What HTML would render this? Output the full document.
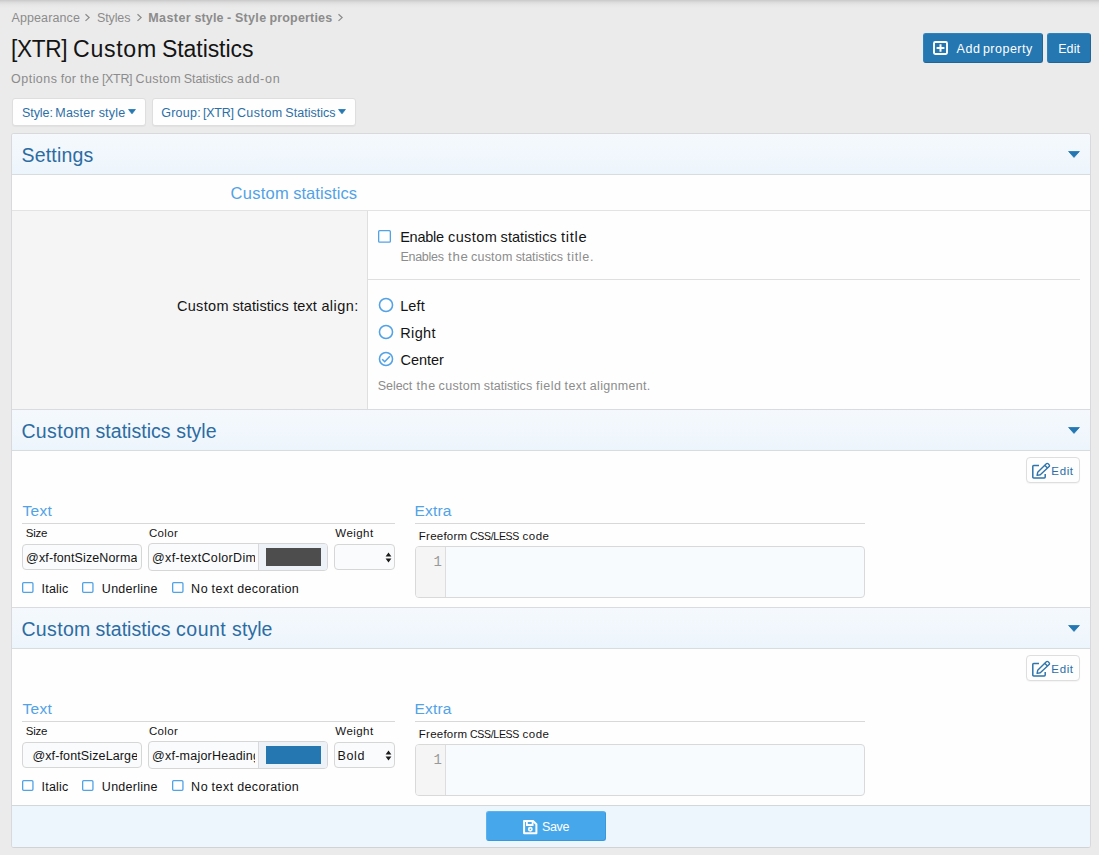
<!DOCTYPE html>
<html lang="en">
<head>
<meta charset="utf-8">
<title>[XTR] Custom Statistics</title>
<style>
*{box-sizing:border-box;margin:0;padding:0}
html,body{width:1099px;height:855px;overflow:hidden}
body{background:#ebebeb;font-family:"Liberation Sans",sans-serif;font-size:13px;color:#141414;position:relative}
.topshadow{position:absolute;left:0;top:0;width:1099px;height:8px;background:linear-gradient(to bottom,#c9c9c9 0,#dcdcdc 30%,#e6e6e6 60%,#ebebeb 100%)}
.abs{position:absolute;white-space:nowrap}
.t{position:absolute;white-space:nowrap}
.btn{position:absolute;border-radius:3px;white-space:nowrap}
.btn.primary{background:#2577b1;color:#fff;border:1px solid #1f6596;border-color:#2b83c0 #1f6596 #1f6596 #2b83c0}
.btn.link{background:#fefefe;color:#2c6fa6;border:1px solid #dedede;box-shadow:0 1px 1px rgba(0,0,0,.04)}
.panel{position:absolute;left:11px;top:133px;width:1080px;height:715px;background:#fefefe;border:1px solid #d7d9db;border-bottom-color:#d0d2d4;border-radius:3px;overflow:hidden}
.panel>*{position:absolute}
.sechead{left:0;width:1078px;height:42px;background:linear-gradient(to bottom,#f5f9fd 0,#edf5fc 100%);border-top:1px solid #d9dcdf;border-bottom:1px solid #d9dcdf;color:#2c6ca2}
.subhead{left:0;top:41px;width:1078px;height:36px;border-bottom:1px solid #e3e3e3;color:#52a2e6}
.labelcol{left:0;top:77px;width:356px;height:198px;background:#f5f5f5;border-right:1px solid #dfdfdf}
.cb{position:absolute;border:1px solid #60a8e4;border-radius:1.5px;background:#fefefe}
.rb{position:absolute;width:14.6px;height:14.6px;border:1.5px solid #5aa5e4;border-radius:50%;background:#fefefe}
.hint{color:#8c8c8c}
.hr{background:#dfdfdf;height:1px}
.grp{left:0;width:1078px;height:157px}
.grp>*{position:absolute}
.ul{height:1px;background:#d8d8d8}
.inp{border:1px solid #d6d6d6;border-radius:4px;background:#fafbfc;overflow:hidden;color:#141414}
.editbtn{width:54px;height:26px;border:1px solid #dedede;border-radius:4px;background:#fefefe;color:#2c6fa6;box-shadow:0 1px 1px rgba(0,0,0,.04)}
.code{width:450px;height:52px;border:1px solid #d9d9d9;border-radius:4px;background:#f8fbfe;overflow:hidden}
.code .gut{position:absolute;left:0;top:0;width:30px;height:50px;background:#f5f5f5;border-right:1px solid #dddddd}
.code .ln{position:absolute;left:0;top:7px;width:26px;text-align:right;font-family:"Liberation Mono",monospace;font-size:14px;line-height:16px;color:#999}
.footer{left:0;top:671px;width:1078px;height:42px;background:#edf5fd;border-top:1px solid #d4d7da}
.save{position:absolute;left:474px;top:5px;width:120px;height:30px;background:#47a7eb;border-radius:3px;color:#fff;border:1px solid #3f9fe3;border-color:#5bb2ef #3b97db #3b97db #5bb2ef}
</style>
</head>
<body>
<div class="topshadow"></div>
<div class="crumbs"><span class="t" style="left:11.47px;top:11px;font-size:12.5px;line-height:14px;letter-spacing:0.107px;color:#8c8c8c;">Appearance</span><svg class="abs" style="left:84.0px;top:13px" width="7" height="9" viewBox="0 0 7 9"><path d="M1.5 1.3 L5.1 4.6 L1.5 7.9" fill="none" stroke="#8c8c8c" stroke-width="1.25"/></svg><span class="t" style="left:97.04px;top:11px;font-size:12.5px;line-height:14px;letter-spacing:-0.125px;color:#8c8c8c;">Styles</span><svg class="abs" style="left:135.6px;top:13px" width="7" height="9" viewBox="0 0 7 9"><path d="M1.5 1.3 L5.1 4.6 L1.5 7.9" fill="none" stroke="#8c8c8c" stroke-width="1.25"/></svg><span class="t" style="left:148.18px;top:11px;font-size:12.5px;line-height:14px;letter-spacing:0.440px;color:#8c8c8c;font-weight:700;">Master</span> <span class="t" style="left:194.56px;top:11px;font-size:12.5px;line-height:14px;letter-spacing:0.094px;color:#8c8c8c;font-weight:700;">style</span> <span class="t" style="left:227.01px;top:11px;font-size:12.5px;line-height:14px;color:#8c8c8c;font-weight:700;">-</span> <span class="t" style="left:234.95px;top:11px;font-size:12.5px;line-height:14px;letter-spacing:0.325px;color:#8c8c8c;font-weight:700;">Style</span> <span class="t" style="left:269.39px;top:11px;font-size:12.5px;line-height:14px;letter-spacing:0.188px;color:#8c8c8c;font-weight:700;">properties</span><svg class="abs" style="left:336.7px;top:13px" width="7" height="9" viewBox="0 0 7 9"><path d="M1.5 1.3 L5.1 4.6 L1.5 7.9" fill="none" stroke="#8c8c8c" stroke-width="1.25"/></svg></div>
<h1 style="font-weight:400"><span class="t" style="left:11.09px;top:36px;font-size:23px;line-height:26px;letter-spacing:-0.350px;color:#141414;transform:scaleX(0.9833);transform-origin:0 0;">[XTR]</span> <span class="t" style="left:73.04px;top:36px;font-size:23px;line-height:26px;letter-spacing:0.700px;color:#141414;transform:scaleX(1.0054);transform-origin:0 0;">Custom</span> <span class="t" style="left:161.97px;top:36px;font-size:23px;line-height:26px;letter-spacing:-0.062px;color:#141414;">Statistics</span></h1>
<span class="t" style="left:11.11px;top:72px;font-size:12.5px;line-height:14px;letter-spacing:0.460px;color:#8c8c8c;">Options</span> <span class="t" style="left:60.83px;top:72px;font-size:12.5px;line-height:14px;letter-spacing:0.194px;color:#8c8c8c;">for</span> <span class="t" style="left:79.91px;top:72px;font-size:12.5px;line-height:14px;letter-spacing:0.700px;color:#8c8c8c;transform:scaleX(1.0090);transform-origin:0 0;">the</span> <span class="t" style="left:101.91px;top:72px;font-size:12.5px;line-height:14px;letter-spacing:-0.319px;color:#8c8c8c;">[XTR]</span> <span class="t" style="left:135.57px;top:72px;font-size:12.5px;line-height:14px;letter-spacing:0.395px;color:#8c8c8c;">Custom</span> <span class="t" style="left:183.74px;top:72px;font-size:12.5px;line-height:14px;letter-spacing:-0.056px;color:#8c8c8c;">Statistics</span> <span class="t" style="left:236.77px;top:72px;font-size:12.5px;line-height:14px;letter-spacing:0.700px;color:#8c8c8c;transform:scaleX(1.0049);transform-origin:0 0;">add-on</span>

<div class="btn primary" style="left:923px;top:33px;width:120px;height:30px"><svg style="position:absolute;left:9px;top:7px" width="15" height="14" viewBox="0 0 15 14"><rect x="1" y="1" width="13" height="12" rx="1.2" fill="none" stroke="#fff" stroke-width="1.9"/><path d="M7.5 3.2 V10.8 M3.6 7 H11.4" stroke="#fff" stroke-width="2" fill="none"/></svg><span class="t" style="left:32.38px;top:8px;font-size:12.5px;line-height:14px;letter-spacing:0.694px;">Add</span> <span class="t" style="left:58.90px;top:8px;font-size:12.5px;line-height:14px;letter-spacing:0.496px;">property</span></div>
<div class="btn primary" style="left:1047px;top:33px;width:44px;height:30px"><span class="t" style="left:10.17px;top:8px;font-size:12.5px;line-height:14px;letter-spacing:0.125px;">Edit</span></div>

<div class="btn link" style="left:12px;top:98px;width:134px;height:28px"><span class="t" style="left:9.04px;top:7px;font-size:12.5px;line-height:14px;letter-spacing:-0.073px;">Style:</span> <span class="t" style="left:42.27px;top:7px;font-size:12.5px;line-height:14px;letter-spacing:0.245px;">Master</span> <span class="t" style="left:85.66px;top:7px;font-size:12.5px;line-height:14px;letter-spacing:0.197px;">style</span><svg class="abs" style="left:114.8px;top:10px" width="8" height="5" viewBox="0 0 8 5"><path d="M0.6 0.5 H7.4 L4.0 4.8 Z" fill="#2577b1" stroke="#2577b1" stroke-width="0.8" stroke-linejoin="round"/></svg></div>
<div class="btn link" style="left:152px;top:98px;width:204px;height:28px"><span class="t" style="left:8.18px;top:7px;font-size:12.5px;line-height:14px;letter-spacing:0.250px;">Group:</span> <span class="t" style="left:50.11px;top:7px;font-size:12.5px;line-height:14px;letter-spacing:-0.294px;">[XTR]</span> <span class="t" style="left:83.88px;top:7px;font-size:12.5px;line-height:14px;letter-spacing:0.455px;">Custom</span> <span class="t" style="left:132.34px;top:7px;font-size:12.5px;line-height:14px;letter-spacing:0.022px;">Statistics</span><svg class="abs" style="left:185.3px;top:10px" width="8" height="5" viewBox="0 0 8 5"><path d="M0.6 0.5 H7.4 L4.0 4.8 Z" fill="#2577b1" stroke="#2577b1" stroke-width="0.8" stroke-linejoin="round"/></svg></div>

<div class="panel">
  <div class="sechead" style="top:-1px"><span class="t" style="left:9.52px;top:10px;font-size:19.5px;line-height:22px;letter-spacing:0.189px;">Settings</span><svg class="abs" style="left:1056px;top:17px" width="12" height="6.6" viewBox="0 0 12 6.6"><path d="M0.6 0.5 H11.4 L6.0 6.3999999999999995 Z" fill="#2577b1" stroke="#2577b1" stroke-width="0.8" stroke-linejoin="round"/></svg></div>
  <div class="subhead"><span class="t" style="left:218.58px;top:9px;font-size:16.5px;line-height:18px;letter-spacing:0.263px;">Custom</span> <span class="t" style="left:281.15px;top:9px;font-size:16.5px;line-height:18px;letter-spacing:0.064px;">statistics</span></div>
  <div class="labelcol"><span class="t" style="left:164.88px;top:87px;font-size:14.5px;line-height:16px;letter-spacing:0.339px;">Custom</span> <span class="t" style="left:220.41px;top:87px;font-size:14.5px;line-height:16px;letter-spacing:0.078px;">statistics</span> <span class="t" style="left:281.18px;top:87px;font-size:14.5px;line-height:16px;letter-spacing:0.108px;">text</span> <span class="t" style="left:309.39px;top:87px;font-size:14.5px;line-height:16px;letter-spacing:0.432px;">align:</span></div>

  <svg class="abs" style="left:365.3px;top:95.0px" width="15" height="14.8" viewBox="0 0 15 14.8"><rect x="1.65" y="1.65" width="11.7" height="11.5" rx="1" fill="#fefefe" stroke="#52a2e6" stroke-width="1.3"/></svg>
  <span class="t" style="left:388.21px;top:95px;font-size:14.5px;line-height:16px;letter-spacing:-0.269px;">Enable</span> <span class="t" style="left:435.99px;top:95px;font-size:14.5px;line-height:16px;letter-spacing:0.400px;">custom</span> <span class="t" style="left:488.61px;top:95px;font-size:14.5px;line-height:16px;letter-spacing:0.056px;">statistics</span> <span class="t" style="left:549.18px;top:95px;font-size:14.5px;line-height:16px;letter-spacing:0.700px;transform:scaleX(1.0120);transform-origin:0 0;">title</span>
  <span class="t hint" style="left:388.38px;top:116px;font-size:12.5px;line-height:14px;letter-spacing:-0.267px;">Enables</span> <span class="t hint" style="left:435.80px;top:116px;font-size:12.5px;line-height:14px;letter-spacing:0.700px;transform:scaleX(1.0589);transform-origin:0 0;">the</span> <span class="t hint" style="left:459.08px;top:116px;font-size:12.5px;line-height:14px;letter-spacing:0.190px;">custom</span> <span class="t hint" style="left:503.66px;top:116px;font-size:12.5px;line-height:14px;letter-spacing:-0.071px;">statistics</span> <span class="t hint" style="left:554.81px;top:116px;font-size:12.5px;line-height:14px;letter-spacing:0.700px;transform:scaleX(1.0040);transform-origin:0 0;">title.</span>
  <div class="hr" style="left:356px;top:145px;width:712px"></div>
  <svg class="abs" style="left:365.6px;top:163.0px" width="16" height="16" viewBox="0 0 16 16"><circle cx="8" cy="8" r="6.55" fill="#fefefe" stroke="#52a2e6" stroke-width="1.55"/></svg><span class="t" style="left:388.21px;top:164px;font-size:14.5px;line-height:16px;letter-spacing:0.102px;">Left</span>
  <svg class="abs" style="left:365.6px;top:190.1px" width="16" height="16" viewBox="0 0 16 16"><circle cx="8" cy="8" r="6.55" fill="#fefefe" stroke="#52a2e6" stroke-width="1.55"/></svg><span class="t" style="left:388.21px;top:191px;font-size:14.5px;line-height:16px;letter-spacing:0.383px;">Right</span>
  <svg class="abs" style="left:365.6px;top:217.3px" width="16" height="16" viewBox="0 0 16 16"><circle cx="8" cy="8" r="6.55" fill="#fefefe" stroke="#52a2e6" stroke-width="1.55"/><path d="M4.2 8.2 L6.7 10.7 L11.9 5.2" fill="none" stroke="#52a2e6" stroke-width="1.6"/></svg><span class="t" style="left:388.47px;top:218px;font-size:14.5px;line-height:16px;letter-spacing:-0.011px;">Center</span>
  <span class="t hint" style="left:365.84px;top:245px;font-size:12.5px;line-height:14px;letter-spacing:-0.057px;">Select</span> <span class="t hint" style="left:404.51px;top:245px;font-size:12.5px;line-height:14px;letter-spacing:0.631px;">the</span> <span class="t hint" style="left:426.58px;top:245px;font-size:12.5px;line-height:14px;letter-spacing:0.330px;">custom</span> <span class="t hint" style="left:471.86px;top:245px;font-size:12.5px;line-height:14px;letter-spacing:0.040px;">statistics</span> <span class="t hint" style="left:524.03px;top:245px;font-size:12.5px;line-height:14px;letter-spacing:0.513px;">field</span> <span class="t hint" style="left:552.51px;top:245px;font-size:12.5px;line-height:14px;letter-spacing:0.408px;">text</span> <span class="t hint" style="left:577.77px;top:245px;font-size:12.5px;line-height:14px;letter-spacing:0.321px;">alignment.</span>

  <div class="sechead" style="top:275px"><span class="t" style="left:9.42px;top:10px;font-size:19.5px;line-height:22px;letter-spacing:0.349px;">Custom</span> <span class="t" style="left:83.57px;top:10px;font-size:19.5px;line-height:22px;letter-spacing:0.027px;">statistics</span> <span class="t" style="left:164.37px;top:10px;font-size:19.5px;line-height:22px;letter-spacing:0.023px;">style</span><svg class="abs" style="left:1056px;top:17px" width="12" height="6.6" viewBox="0 0 12 6.6"><path d="M0.6 0.5 H11.4 L6.0 6.3999999999999995 Z" fill="#2577b1" stroke="#2577b1" stroke-width="0.8" stroke-linejoin="round"/></svg></div>

  <div class="grp" style="top:317px">
    <div class="editbtn" style="left:1013.5px;top:6px"><svg style="position:absolute;left:4px;top:4px" width="20" height="18" viewBox="0 0 20 18"><path d="M14.2 12 V15.1 a0.9 0.9 0 0 1 -0.9 0.9 H2.7 a0.9 0.9 0 0 1 -0.9 -0.9 V4.5 a0.9 0.9 0 0 1 0.9 -0.9 H8" fill="none" stroke="#2f74aa" stroke-width="1.5"/><path d="M6.1 13.4 L6.7 10.3 L15.3 1.8 a1.3 1.3 0 0 1 1.9 0 l0.9 0.9 a1.3 1.3 0 0 1 0 1.9 L9.3 12.8 Z M13.7 3.3 L16.5 6.1" fill="none" stroke="#2f74aa" stroke-width="1.4" stroke-linejoin="round"/></svg><span class="t" style="left:24.86px;top:7px;font-size:11.5px;line-height:12px;letter-spacing:0.603px;">Edit</span></div>
    <span class="t" style="left:10.46px;top:51px;font-size:15.5px;line-height:17px;letter-spacing:0.341px;color:#52a2e6;">Text</span>
    <div class="ul" style="left:10px;top:72px;width:373px"></div>
    <span class="t" style="left:13.78px;top:76px;font-size:11.5px;line-height:12px;letter-spacing:-0.215px;">Size</span>
    <span class="t" style="left:136.93px;top:76px;font-size:11.5px;line-height:12px;letter-spacing:0.343px;">Color</span>
    <span class="t" style="left:323.35px;top:76px;font-size:11.5px;line-height:12px;letter-spacing:0.429px;">Weight</span>
    <div class="inp" style="left:10px;top:93px;width:120px;height:26px"><span class="t" style="left:3.12px;top:6px;font-size:12.5px;line-height:14px;letter-spacing:0.126px;width:110.5px;overflow:hidden;">@xf-fontSizeNormal</span></div>
    <div class="inp" style="left:136px;top:92px;width:180px;height:28px"><span class="t" style="left:3.03px;top:7px;font-size:12.5px;line-height:14px;letter-spacing:0.345px;width:103.4px;overflow:hidden;">@xf-textColorDimmed</span><div style="position:absolute;left:109px;top:0;width:70px;height:26px;background:#edf1f8;border-left:1px solid #d9d9d9"><div style="position:absolute;left:7px;top:4px;width:54.5px;height:18px;background:#4d4d4d"></div></div></div>
    <div class="inp" style="left:322px;top:93px;width:61px;height:26px"><svg style="position:absolute;left:49.5px;top:7px" width="7" height="11" viewBox="0 0 7 11"><path d="M0.6 4.4 L3.5 0.4 L6.4 4.4 Z M0.6 6.4 L3.5 10.4 L6.4 6.4 Z" fill="#1c1c1c"/></svg></div>
    <svg class="abs" style="left:9.3px;top:130.0px" width="13.6" height="13" viewBox="0 0 13.6 13"><rect x="1.65" y="1.65" width="10.299999999999999" height="9.7" rx="1" fill="#fefefe" stroke="#52a2e6" stroke-width="1.3"/></svg><span class="t" style="left:29.55px;top:131px;font-size:12.5px;line-height:14px;letter-spacing:0.215px;">Italic</span>
    <svg class="abs" style="left:69.3px;top:130.0px" width="13.6" height="13" viewBox="0 0 13.6 13"><rect x="1.65" y="1.65" width="10.299999999999999" height="9.7" rx="1" fill="#fefefe" stroke="#52a2e6" stroke-width="1.3"/></svg><span class="t" style="left:89.84px;top:131px;font-size:12.5px;line-height:14px;letter-spacing:0.277px;">Underline</span>
    <svg class="abs" style="left:159.0px;top:130.0px" width="13.6" height="13" viewBox="0 0 13.6 13"><rect x="1.65" y="1.65" width="10.299999999999999" height="9.7" rx="1" fill="#fefefe" stroke="#52a2e6" stroke-width="1.3"/></svg><span class="t" style="left:178.97px;top:131px;font-size:12.5px;line-height:14px;letter-spacing:0.700px;transform:scaleX(1.0041);transform-origin:0 0;">No</span> <span class="t" style="left:199.51px;top:131px;font-size:12.5px;line-height:14px;letter-spacing:0.542px;">text</span> <span class="t" style="left:225.17px;top:131px;font-size:12.5px;line-height:14px;letter-spacing:0.361px;">decoration</span>
    <span class="t" style="left:402.43px;top:51px;font-size:15.5px;line-height:17px;letter-spacing:0.195px;color:#52a2e6;">Extra</span>
    <div class="ul" style="left:403px;top:72px;width:450px"></div>
    <span class="t" style="left:406.86px;top:79px;font-size:11.5px;line-height:12px;letter-spacing:0.229px;">Freeform</span> <span class="t" style="left:457.97px;top:79px;font-size:11.5px;line-height:12px;letter-spacing:-0.350px;transform:scaleX(0.9176);transform-origin:0 0;">CSS/LESS</span> <span class="t" style="left:510.52px;top:79px;font-size:11.5px;line-height:12px;letter-spacing:0.519px;">code</span>
    <div class="code" style="left:403px;top:95px"><div class="gut"></div><div class="ln">1</div></div>
  </div>
  <div class="sechead" style="top:473px"><span class="t" style="left:9.42px;top:10px;font-size:19.5px;line-height:22px;letter-spacing:0.349px;">Custom</span> <span class="t" style="left:83.57px;top:10px;font-size:19.5px;line-height:22px;letter-spacing:0.027px;">statistics</span> <span class="t" style="left:164.08px;top:10px;font-size:19.5px;line-height:22px;letter-spacing:0.485px;">count</span> <span class="t" style="left:220.07px;top:10px;font-size:19.5px;line-height:22px;letter-spacing:0.073px;">style</span><svg class="abs" style="left:1056px;top:17px" width="12" height="6.6" viewBox="0 0 12 6.6"><path d="M0.6 0.5 H11.4 L6.0 6.3999999999999995 Z" fill="#2577b1" stroke="#2577b1" stroke-width="0.8" stroke-linejoin="round"/></svg></div>

  <div class="grp" style="top:515px">
    <div class="editbtn" style="left:1013.5px;top:6px"><svg style="position:absolute;left:4px;top:4px" width="20" height="18" viewBox="0 0 20 18"><path d="M14.2 12 V15.1 a0.9 0.9 0 0 1 -0.9 0.9 H2.7 a0.9 0.9 0 0 1 -0.9 -0.9 V4.5 a0.9 0.9 0 0 1 0.9 -0.9 H8" fill="none" stroke="#2f74aa" stroke-width="1.5"/><path d="M6.1 13.4 L6.7 10.3 L15.3 1.8 a1.3 1.3 0 0 1 1.9 0 l0.9 0.9 a1.3 1.3 0 0 1 0 1.9 L9.3 12.8 Z M13.7 3.3 L16.5 6.1" fill="none" stroke="#2f74aa" stroke-width="1.4" stroke-linejoin="round"/></svg><span class="t" style="left:24.86px;top:7px;font-size:11.5px;line-height:12px;letter-spacing:0.603px;">Edit</span></div>
    <span class="t" style="left:10.46px;top:51px;font-size:15.5px;line-height:17px;letter-spacing:0.341px;color:#52a2e6;">Text</span>
    <div class="ul" style="left:10px;top:72px;width:373px"></div>
    <span class="t" style="left:13.78px;top:76px;font-size:11.5px;line-height:12px;letter-spacing:-0.215px;">Size</span>
    <span class="t" style="left:136.93px;top:76px;font-size:11.5px;line-height:12px;letter-spacing:0.343px;">Color</span>
    <span class="t" style="left:323.35px;top:76px;font-size:11.5px;line-height:12px;letter-spacing:0.429px;">Weight</span>
    <div class="inp" style="left:10px;top:93px;width:120px;height:26px"><span class="t" style="left:9.42px;top:6px;font-size:12.5px;line-height:14px;letter-spacing:0.126px;width:104.2px;overflow:hidden;">@xf-fontSizeLarge</span></div>
    <div class="inp" style="left:136px;top:92px;width:180px;height:28px"><span class="t" style="left:3.03px;top:7px;font-size:12.5px;line-height:14px;letter-spacing:0.238px;width:103.4px;overflow:hidden;">@xf-majorHeadingTextColor</span><div style="position:absolute;left:109px;top:0;width:70px;height:26px;background:#edf1f8;border-left:1px solid #d9d9d9"><div style="position:absolute;left:7px;top:4px;width:54.5px;height:18px;background:#2577b1"></div></div></div>
    <div class="inp" style="left:322px;top:93px;width:61px;height:26px"><span class="t" style="left:2.38px;top:6px;font-size:12.5px;line-height:14px;letter-spacing:0.671px;">Bold</span><svg style="position:absolute;left:49.5px;top:7px" width="7" height="11" viewBox="0 0 7 11"><path d="M0.6 4.4 L3.5 0.4 L6.4 4.4 Z M0.6 6.4 L3.5 10.4 L6.4 6.4 Z" fill="#1c1c1c"/></svg></div>
    <svg class="abs" style="left:9.3px;top:130.0px" width="13.6" height="13" viewBox="0 0 13.6 13"><rect x="1.65" y="1.65" width="10.299999999999999" height="9.7" rx="1" fill="#fefefe" stroke="#52a2e6" stroke-width="1.3"/></svg><span class="t" style="left:29.55px;top:131px;font-size:12.5px;line-height:14px;letter-spacing:0.215px;">Italic</span>
    <svg class="abs" style="left:69.3px;top:130.0px" width="13.6" height="13" viewBox="0 0 13.6 13"><rect x="1.65" y="1.65" width="10.299999999999999" height="9.7" rx="1" fill="#fefefe" stroke="#52a2e6" stroke-width="1.3"/></svg><span class="t" style="left:89.84px;top:131px;font-size:12.5px;line-height:14px;letter-spacing:0.277px;">Underline</span>
    <svg class="abs" style="left:159.0px;top:130.0px" width="13.6" height="13" viewBox="0 0 13.6 13"><rect x="1.65" y="1.65" width="10.299999999999999" height="9.7" rx="1" fill="#fefefe" stroke="#52a2e6" stroke-width="1.3"/></svg><span class="t" style="left:178.97px;top:131px;font-size:12.5px;line-height:14px;letter-spacing:0.700px;transform:scaleX(1.0041);transform-origin:0 0;">No</span> <span class="t" style="left:199.51px;top:131px;font-size:12.5px;line-height:14px;letter-spacing:0.542px;">text</span> <span class="t" style="left:225.17px;top:131px;font-size:12.5px;line-height:14px;letter-spacing:0.361px;">decoration</span>
    <span class="t" style="left:402.43px;top:51px;font-size:15.5px;line-height:17px;letter-spacing:0.195px;color:#52a2e6;">Extra</span>
    <div class="ul" style="left:403px;top:72px;width:450px"></div>
    <span class="t" style="left:406.86px;top:79px;font-size:11.5px;line-height:12px;letter-spacing:0.229px;">Freeform</span> <span class="t" style="left:457.97px;top:79px;font-size:11.5px;line-height:12px;letter-spacing:-0.350px;transform:scaleX(0.9176);transform-origin:0 0;">CSS/LESS</span> <span class="t" style="left:510.52px;top:79px;font-size:11.5px;line-height:12px;letter-spacing:0.519px;">code</span>
    <div class="code" style="left:403px;top:95px"><div class="gut"></div><div class="ln">1</div></div>
  </div>
  <div class="footer"><div class="save"><svg style="position:absolute;left:36px;top:8px" width="15" height="15" viewBox="0 0 15 15"><path d="M1.1 0.9 H10 L13.4 4.3 V13.3 H1.1 Z" fill="none" stroke="#fff" stroke-width="2" stroke-linejoin="round"/><path d="M3.9 1.2 V5 H9.6 V1.2" fill="none" stroke="#fff" stroke-width="1.8"/><circle cx="7.3" cy="9.3" r="1.6" fill="none" stroke="#fff" stroke-width="1.7"/></svg><span class="t" style="left:55.24px;top:8px;font-size:12.5px;line-height:14px;letter-spacing:-0.350px;transform:scaleX(0.9991);transform-origin:0 0;">Save</span></div></div>
</div>
</body>
</html>
